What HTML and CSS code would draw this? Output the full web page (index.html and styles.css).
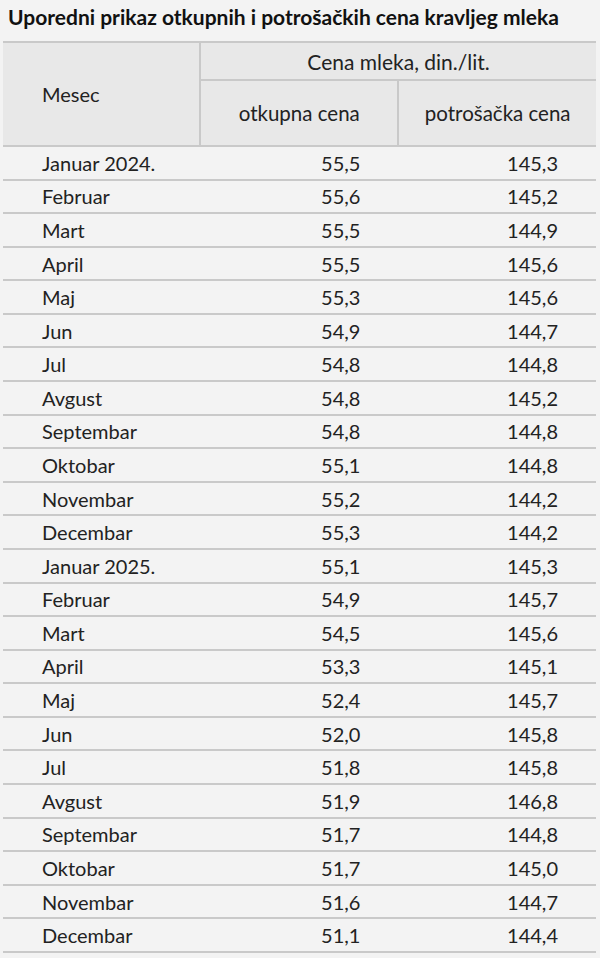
FILE: index.html
```html
<!DOCTYPE html>
<html lang="sr">
<head>
<meta charset="utf-8">
<link rel="stylesheet" href="styles.css">
</head>
<body>
<h1 class="title">Uporedni prikaz otkupnih i potrošačkih cena kravljeg mleka</h1>
<table class="tbl">
  <thead>
    <tr class="h1row">
      <th class="c-month" rowspan="2">Mesec</th>
      <th class="c-group" colspan="2">Cena mleka, din./lit.</th>
    </tr>
    <tr class="h2row">
      <th class="c-sub">otkupna cena</th>
      <th class="c-sub">potrošačka cena</th>
    </tr>
  </thead>
  <tbody>
    <tr><td>Januar 2024.</td><td>55,5</td><td>145,3</td></tr>
    <tr><td>Februar</td><td>55,6</td><td>145,2</td></tr>
    <tr><td>Mart</td><td>55,5</td><td>144,9</td></tr>
    <tr><td>April</td><td>55,5</td><td>145,6</td></tr>
    <tr><td>Maj</td><td>55,3</td><td>145,6</td></tr>
    <tr><td>Jun</td><td>54,9</td><td>144,7</td></tr>
    <tr><td>Jul</td><td>54,8</td><td>144,8</td></tr>
    <tr><td>Avgust</td><td>54,8</td><td>145,2</td></tr>
    <tr><td>Septembar</td><td>54,8</td><td>144,8</td></tr>
    <tr><td>Oktobar</td><td>55,1</td><td>144,8</td></tr>
    <tr><td>Novembar</td><td>55,2</td><td>144,2</td></tr>
    <tr><td>Decembar</td><td>55,3</td><td>144,2</td></tr>
    <tr><td>Januar 2025.</td><td>55,1</td><td>145,3</td></tr>
    <tr><td>Februar</td><td>54,9</td><td>145,7</td></tr>
    <tr><td>Mart</td><td>54,5</td><td>145,6</td></tr>
    <tr><td>April</td><td>53,3</td><td>145,1</td></tr>
    <tr><td>Maj</td><td>52,4</td><td>145,7</td></tr>
    <tr><td>Jun</td><td>52,0</td><td>145,8</td></tr>
    <tr><td>Jul</td><td>51,8</td><td>145,8</td></tr>
    <tr><td>Avgust</td><td>51,9</td><td>146,8</td></tr>
    <tr><td>Septembar</td><td>51,7</td><td>144,8</td></tr>
    <tr><td>Oktobar</td><td>51,7</td><td>145,0</td></tr>
    <tr><td>Novembar</td><td>51,6</td><td>144,7</td></tr>
    <tr><td>Decembar</td><td>51,1</td><td>144,4</td></tr>
  </tbody>
</table>
</body>
</html>
```
FILE: styles.css
```css
html, body {
  margin: 0;
  padding: 0;
  background: #f3f3f3;
}
body {
  font-family: Lato, "Open Sans", sans-serif;
  color: #222;
}
.title {
  margin: 0;
  padding: 4px 0 0 8px;
  height: 36px;
  box-sizing: border-box;
  font-size: 21px;
  font-weight: 700;
  color: #111;
  line-height: 25px;
  white-space: nowrap;
}
.tbl {
  margin: 5px 0 0 3px;
  width: 593px;
  border-collapse: collapse;
  font-size: 20px;
}
.tbl th {
  background: #e8e8e8;
  font-weight: 400;
  border: 2px solid #c9c9c9;
  border-left: none;
  border-right: none;
  padding: 0;
}
.tbl th + th, .h2row th + th {
  border-left: 2px solid #c9c9c9;
}
.h2row th:first-child {
  border-left: 2px solid #c9c9c9;
}
.c-month {
  width: 198px;
  text-align: left;
  padding-left: 39px !important;
  box-sizing: border-box;
  vertical-align: middle;
}
.c-group { font-size: 21px; }
.c-sub { width: 198px; font-size: 20.5px; }
.h1row { height: 38px; }
.h2row { height: 66px; }
.tbl td {
  height: 33.58px;
  padding: 0 38px 0 0;
  border-bottom: 2px solid #c9c9c9;
  text-align: right;
  box-sizing: border-box;
  line-height: 20px;
}
.tbl td:first-child {
  text-align: left;
  padding: 0 0 0 39px;
}
```
